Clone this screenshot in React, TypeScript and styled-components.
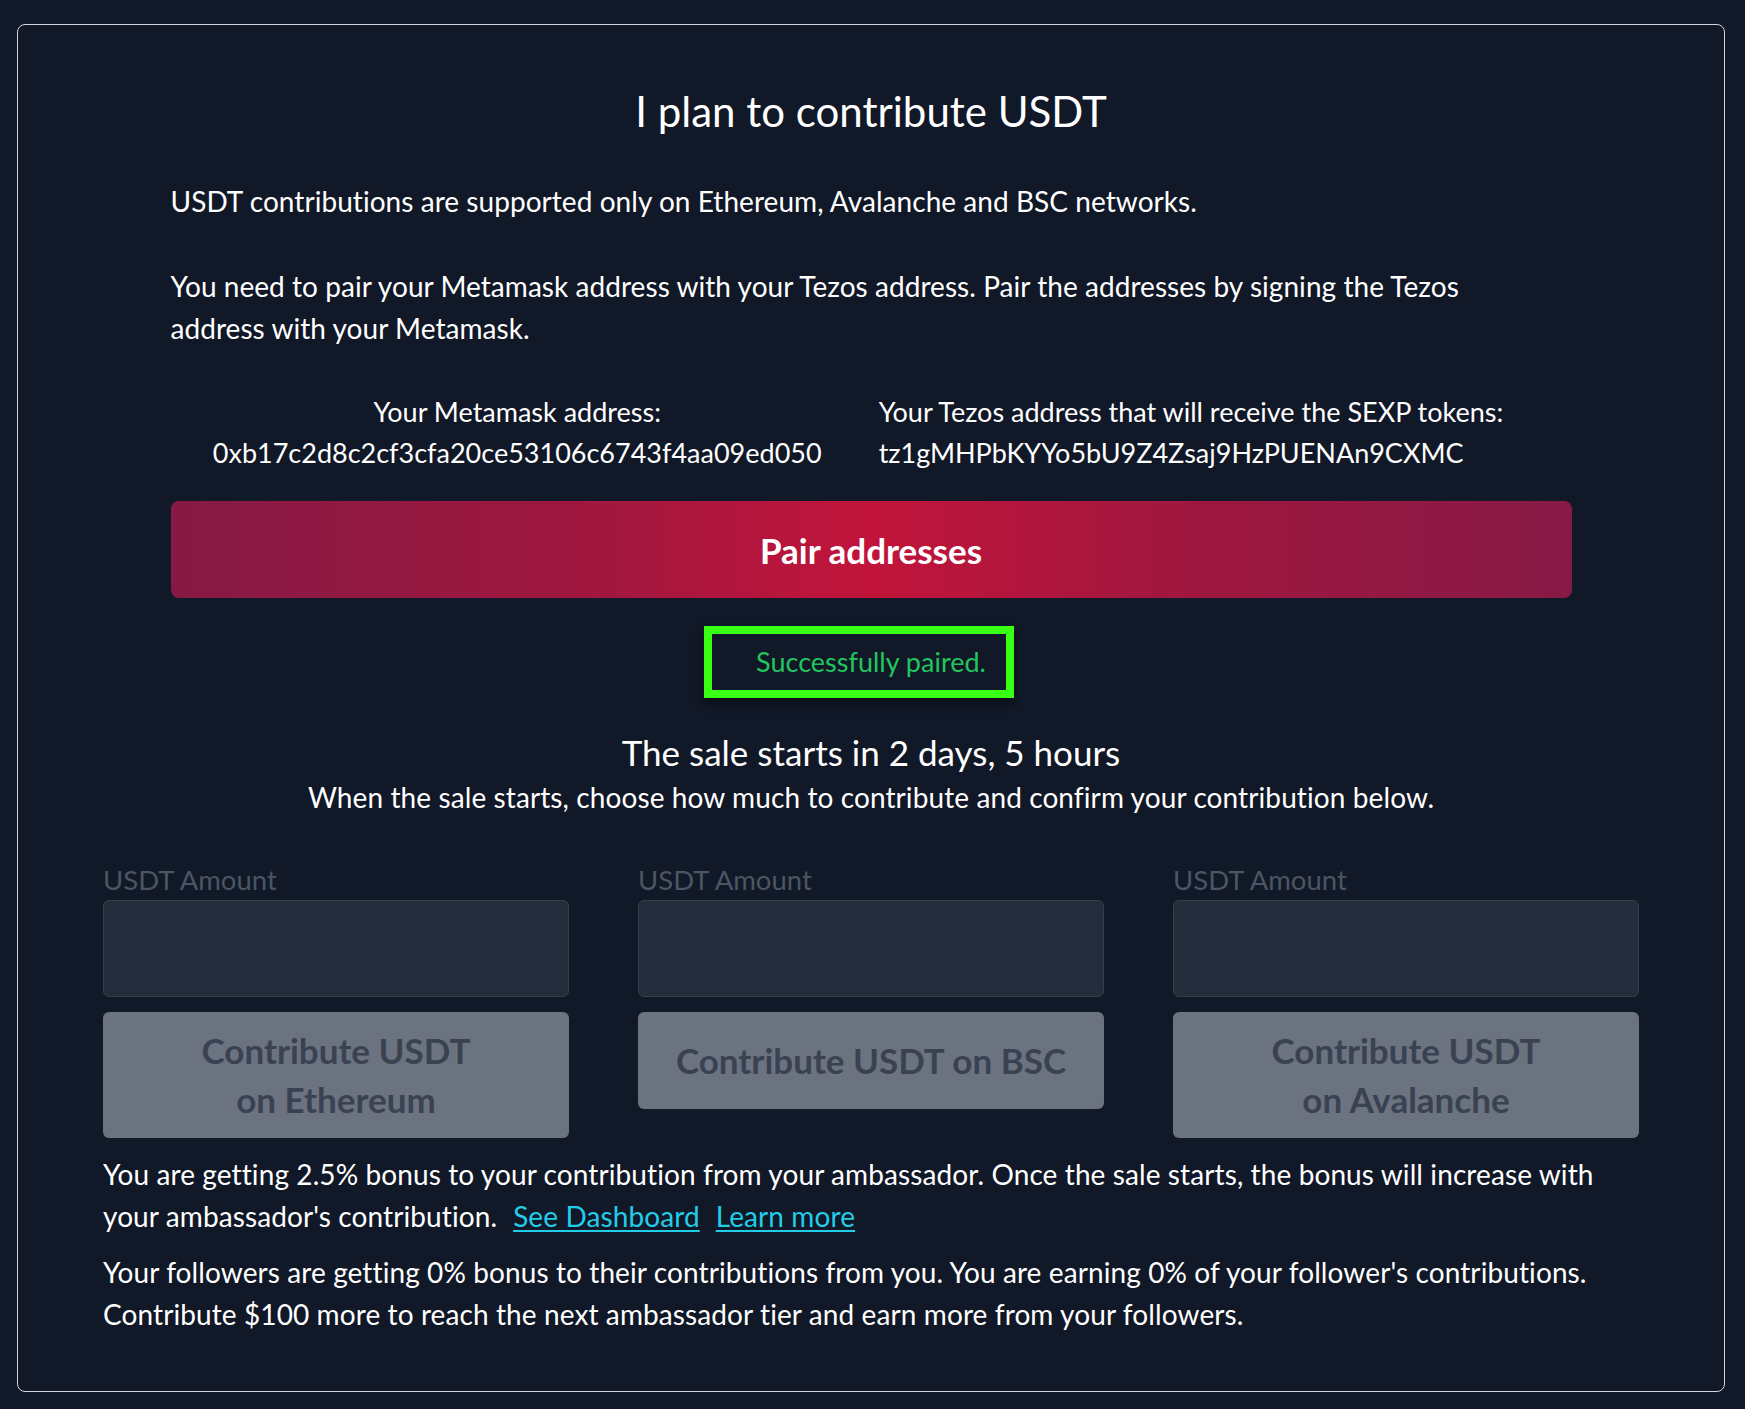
import React from "react";
import styled, { createGlobalStyle } from "styled-components";

const GlobalStyle = createGlobalStyle`
  html, body {
    margin: 0;
    padding: 0;
    background: #111827;
  }
  body {
    font-family: Lato, "Open Sans", "Noto Sans", sans-serif;
    color: #ffffff;
  }
  * {
    box-sizing: border-box;
  }
`;

const Page = styled.div`
  padding: 24px 20px 17px 17px;
  min-height: 1409px;
`;

const Panel = styled.section`
  border: 1px solid #d1d5db;
  border-radius: 8px;
  padding: 61px 0 56px;
`;

const Column = styled.div`
  width: 1401px;
  margin: 0 auto;
`;

const Title = styled.h1`
  margin: 0;
  text-align: center;
  font-size: 42px;
  line-height: 50px;
  font-weight: 400;
`;

const Paragraph = styled.p<{ $mt: number }>`
  margin: ${(p) => p.$mt}px 0 0;
  font-size: 28px;
  line-height: 42px;
  letter-spacing: 0.05px;
`;

const AddressRow = styled.div`
  display: flex;
  justify-content: center;
  gap: 57px;
  padding-right: 26px;
  margin-top: 42px;
  font-size: 27px;
  line-height: 41px;
`;

const AddressBlock = styled.div<{ $align: "center" | "left" }>`
  text-align: ${(p) => p.$align};
`;

const PairButton = styled.button`
  display: block;
  width: 100%;
  height: 97px;
  margin-top: 28px;
  border: none;
  border-radius: 8px;
  background: linear-gradient(90deg, #861a44 0%, #a0173f 30%, #c2143b 50%, #a0173f 72%, #871a46 100%);
  color: #ffffff;
  font-family: inherit;
  font-size: 35px;
  font-weight: 700;
  cursor: pointer;
`;

const StatusRow = styled.div`
  display: flex;
  justify-content: center;
  margin-top: 28px;
`;

const StatusBox = styled.div`
  margin-right: 24px;
  border: 8px solid #39ff14;
  padding: 0 20px 0 44px;
  line-height: 56px;
  font-size: 27px;
  color: #22c55e;
  box-shadow: 0 5px 8px rgba(0, 0, 0, 0.45);
`;

const Countdown = styled.div`
  margin-top: 34px;
  text-align: center;
`;

const CountdownTitle = styled.h2`
  margin: 0;
  font-size: 35px;
  line-height: 40px;
  font-weight: 400;
`;

const CountdownNote = styled.p`
  margin: 4px 0 0;
  font-size: 28px;
  line-height: 42px;
  letter-spacing: 0.1px;
`;

const Contribute = styled.div`
  width: 1536px;
  margin: 42px auto 0;
`;

const FieldGrid = styled.div`
  display: grid;
  grid-template-columns: repeat(3, 1fr);
  column-gap: 69px;
  align-items: start;
`;

const Field = styled.div`
  display: flex;
  flex-direction: column;
`;

const FieldLabel = styled.label`
  font-size: 27.5px;
  line-height: 40px;
  color: #4b5563;
`;

const AmountInput = styled.input`
  height: 97px;
  width: 100%;
  background: #242b3a;
  border: 1px solid #363e4c;
  border-radius: 6px;
  color: #ffffff;
  font-size: 27px;
  padding: 0 18px;
  font-family: inherit;
  outline: none;
`;

const ContributeButton = styled.button`
  margin-top: 15px;
  min-height: 97px;
  padding: 14px 24px;
  border: none;
  border-radius: 6px;
  background: #6b7280;
  color: #3a4252;
  font-family: inherit;
  font-size: 35px;
  line-height: 49px;
  font-weight: 700;
  cursor: not-allowed;
`;

const Note = styled.p<{ $mt: number }>`
  margin: ${(p) => p.$mt}px 0 0;
  font-size: 28px;
  line-height: 42px;
  letter-spacing: 0.1px;
`;

const NoteLink = styled.a`
  margin-left: 16px;
  color: #22cde8;
  text-decoration: underline;
  text-underline-offset: 3px;
`;

const networks = [
  { key: "eth", lines: ["Contribute USDT", "on Ethereum"] },
  { key: "bsc", lines: ["Contribute USDT on BSC"] },
  { key: "avax", lines: ["Contribute USDT", "on Avalanche"] },
];

export default function App() {
  return (
    <>
      <GlobalStyle />
      <Page>
        <Panel>
          <Column>
            <Title>I plan to contribute USDT</Title>
            <Paragraph $mt={44}>
              USDT contributions are supported only on Ethereum, Avalanche and BSC networks.
            </Paragraph>
            <Paragraph $mt={43}>
              You need to pair your Metamask address with your Tezos address. Pair the addresses by signing the Tezos
              <br />
              address with your Metamask.
            </Paragraph>
            <AddressRow>
              <AddressBlock $align="center">
                <div>Your Metamask address:</div>
                <div>0xb17c2d8c2cf3cfa20ce53106c6743f4aa09ed050</div>
              </AddressBlock>
              <AddressBlock $align="left">
                <div>Your Tezos address that will receive the SEXP tokens:</div>
                <div>tz1gMHPbKYYo5bU9Z4Zsaj9HzPUENAn9CXMC</div>
              </AddressBlock>
            </AddressRow>
            <PairButton>Pair addresses</PairButton>
            <StatusRow>
              <StatusBox>Successfully paired.</StatusBox>
            </StatusRow>
            <Countdown>
              <CountdownTitle>The sale starts in 2 days, 5 hours</CountdownTitle>
              <CountdownNote>
                When the sale starts, choose how much to contribute and confirm your contribution below.
              </CountdownNote>
            </Countdown>
          </Column>
          <Contribute>
            <FieldGrid>
              {networks.map((n) => (
                <Field key={n.key}>
                  <FieldLabel htmlFor={`amount-${n.key}`}>USDT Amount</FieldLabel>
                  <AmountInput id={`amount-${n.key}`} type="text" disabled />
                  <ContributeButton disabled>
                    {n.lines.map((l, i) => (
                      <React.Fragment key={l}>
                        {i > 0 && <br />}
                        {l}
                      </React.Fragment>
                    ))}
                  </ContributeButton>
                </Field>
              ))}
            </FieldGrid>
            <Note $mt={15}>
              You are getting 2.5% bonus to your contribution from your ambassador. Once the sale starts, the bonus will increase with
              <br />
              your ambassador's contribution.
              <NoteLink href="#dashboard">See Dashboard</NoteLink>
              <NoteLink href="#learn">Learn more</NoteLink>
            </Note>
            <Note $mt={14}>
              Your followers are getting 0% bonus to their contributions from you. You are earning 0% of your follower's contributions.
              <br />
              Contribute $100 more to reach the next ambassador tier and earn more from your followers.
            </Note>
          </Contribute>
        </Panel>
      </Page>
    </>
  );
}
